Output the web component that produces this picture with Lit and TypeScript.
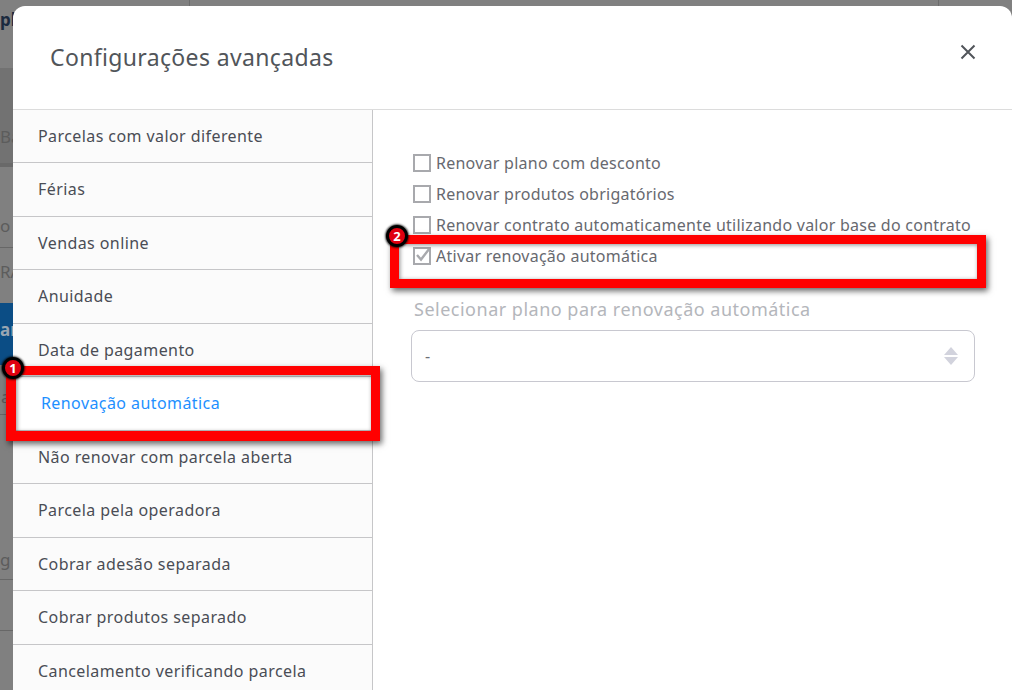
import { LitElement, html, css, svg } from "lit";
import { customElement } from "lit/decorators.js";

const menu = [
  "Parcelas com valor diferente",
  "Férias",
  "Vendas online",
  "Anuidade",
  "Data de pagamento",
  "Renovação automática",
  "Não renovar com parcela aberta",
  "Parcela pela operadora",
  "Cobrar adesão separada",
  "Cobrar produtos separado",
  "Cancelamento verificando parcela",
];

const options = [
  { label: "Renovar plano com desconto", checked: false },
  { label: "Renovar produtos obrigatórios", checked: false },
  { label: "Renovar contrato automaticamente utilizando valor base do contrato", checked: false },
  { label: "Ativar renovação automática", checked: true },
];

@customElement("app-root")
export class AppRoot extends LitElement {
  static styles = css`
    :host {
      display: block;
      position: relative;
      width: 1012px;
      height: 690px;
      overflow: hidden;
      background: #808080;
      font-family: "Noto Sans", sans-serif;
      color: #51555a;
    }
    /* what shows of the page behind the dialog */
    .bg { position: absolute; font-size: 17px; line-height: 24px; white-space: nowrap; color: #5c5c5c; }
    .t-pl { left: 0; top: 8px; font-weight: 700; color: #1b2a3f; }
    .t-ba { left: 0; top: 125px; }
    .t-oc { left: 0; top: 214px; }
    .t-ra { left: 0; top: 260px; }
    .t-ar { left: 0; top: 318px; font-weight: 700; color: #9aa6b2; z-index: 1; }
    .t-a { left: 1px; top: 385px; }
    .t-g { left: 0; top: 548px; }
    .band { position: absolute; left: 0; width: 13px; }
    .b-gray { top: 68px; height: 95px; background: #727272; }
    .b-dark { top: 163px; height: 4px; background: #696969; }
    .b-blue { top: 303px; height: 62px; background: #0b4d85; }
    .b-line { height: 1px; background: #676767; }
    .l2 { top: 247px; }
    .l3 { top: 414px; }
    .l4 { top: 579px; }
    .l5 { top: 630px; }
    .vline { position: absolute; top: 0; width: 1px; height: 6px; background: #6c6c6c; }
    .v1 { left: 189px; }
    .v2 { left: 938px; }

    .modal {
      position: absolute;
      left: 13px;
      top: 6px;
      right: 0;
      bottom: -20px;
      z-index: 2;
      background: #fff;
      border-radius: 12px 12px 0 0;
      display: flex;
      flex-direction: column;
    }
    .head {
      height: 103.5px;
      flex: none;
      box-sizing: border-box;
      border-bottom: 1px solid #dcdcdc;
      padding: 35px 0 0 37px;
      font-size: 23px;
      line-height: 32px;
      letter-spacing: 0.35px;
      color: #51555a;
    }
    .close { position: absolute; left: 947px; top: 38px; width: 16px; height: 16px; }
    .body { display: flex; flex: 1; min-height: 0; }
    .side {
      width: 360px;
      flex: none;
      box-sizing: border-box;
      background: #fbfbfb;
      border-right: 1px solid #c6c6c8;
    }
    .item {
      height: 53.5px;
      box-sizing: border-box;
      border-bottom: 1px solid #c6c6c8;
      padding-left: 25px;
      display: flex;
      align-items: center;
      font-size: 16px;
      letter-spacing: 0.42px;
      color: #4a4d55;
    }
    .item.active { color: #1e90ff; background: #fff; padding-left: 28px; }
    .content { padding: 37.5px 0 0 38px; flex: 1; }
    .opt {
      display: flex;
      align-items: center;
      gap: 5px;
      height: 31px;
      padding-left: 2px;
      font-size: 16px;
      letter-spacing: 0.25px;
      color: #67696f;
      white-space: nowrap;
    }
    .box { width: 18px; height: 18px; flex: none; overflow: visible; }
    .label { margin: 25px 0 0 3px; font-size: 18px; line-height: 26px; letter-spacing: 0.5px; color: #b4b6bb; }
    .select {
      width: 564px;
      height: 52px;
      box-sizing: border-box;
      margin-top: 8px;
      border: 1px solid #c8c8d0;
      border-radius: 8px;
      display: flex;
      align-items: center;
      justify-content: space-between;
      padding: 0 16px 0 13px;
      font-size: 16px;
      color: #6d6f75;
    }
    .mark {
      position: absolute;
      z-index: 3;
      box-sizing: border-box;
      border: 9px solid #ff0000;
      box-shadow: 2px 3px 6px rgba(0, 0, 0, 0.6), inset 1px 1px 4px rgba(0, 0, 0, 0.45);
    }
    .m1 { left: 6px; top: 366px; width: 374px; height: 75px; border-width: 9px 9px 10px 10px; }
    .m2 { left: 390px; top: 235px; width: 596px; height: 53px; }
    .badge {
      position: absolute;
      z-index: 4;
      width: 22px;
      height: 22px;
      box-sizing: border-box;
      border-radius: 50%;
      background: #e0000f;
      border: 3px solid #000;
      box-shadow: 0 0 2px 1px rgba(0, 0, 0, 0.7);
      color: #fff;
      font-size: 13px;
      font-weight: 700;
      display: flex;
      align-items: center;
      justify-content: center;
    }
    .b1 { left: 2px; top: 357px; }
    .b2 { left: 386px; top: 225px; }
  `;

  render() {
    return html`
      <div class="band b-gray"></div>
      <div class="band b-dark"></div>
      <div class="band b-blue"></div>
      <div class="band b-line l2"></div>
      <div class="band b-line l3"></div>
      <div class="band b-line l4"></div>
      <div class="band b-line l5"></div>
      <div class="vline v1"></div>
      <div class="vline v2"></div>
      <div class="bg t-pl">pl</div>
      <div class="bg t-ba">Ba</div>
      <div class="bg t-oc">o c</div>
      <div class="bg t-ra">RA</div>
      <div class="bg t-ar">ar</div>
      <div class="bg t-a">a</div>
      <div class="bg t-g">g</div>

      <div class="modal">
        <div class="head">Configurações avançadas</div>
        <svg class="close" viewBox="0 0 16 16" fill="none" stroke="#51555a" stroke-width="2">
          <path d="M1.5 1.5 14.5 14.5M14.5 1.5 1.5 14.5" />
        </svg>
        <div class="body">
          <div class="side">
            ${menu.map(
              (m, i) => html`<div class="item ${i === 5 ? "active" : ""}">${m}</div>`
            )}
          </div>
          <div class="content">
            ${options.map(
              (o) => html`
                <div class="opt">
                  <svg class="box" viewBox="0 0 18 18" fill="none">
                    <rect x="1" y="1" width="16" height="16" stroke="#a8a9ad" stroke-width="2" />
                    ${o.checked
                      ? svg`<path d="M4 8l4 4.5L16.5 1.5" stroke="#a8a9ad" stroke-width="2.4" />`
                      : ""}
                  </svg>
                  <span>${o.label}</span>
                </div>
              `
            )}
            <div class="label">Selecionar plano para renovação automática</div>
            <div class="select">
              <span>-</span>
              <svg width="14" height="18" viewBox="0 0 14 18" fill="#d2d3dd">
                <path d="M7 0 14 8H0zM7 18 0 10h14z" />
              </svg>
            </div>
          </div>
        </div>
      </div>

      <div class="mark m1"></div>
      <div class="mark m2"></div>
      <div class="badge b1">1</div>
      <div class="badge b2">2</div>
    `;
  }
}
